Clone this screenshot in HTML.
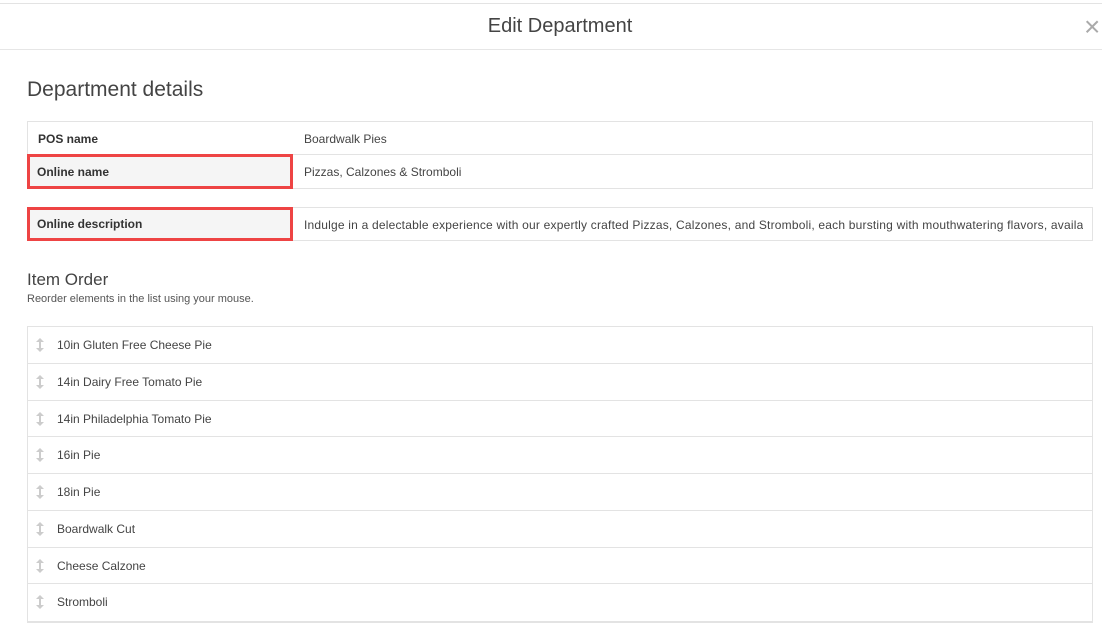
<!DOCTYPE html>
<html><head><meta charset="utf-8"><style>
*{margin:0;padding:0;box-sizing:border-box}
body{width:1102px;height:631px;background:#fff;font-family:"Liberation Sans",sans-serif;color:#444;position:relative;overflow:hidden}
.abs{position:absolute}
.topline{left:0;top:3px;width:1102px;height:1px;background:#e3e3e3}
.hdrline{left:0;top:49px;width:1102px;height:1px;background:#e6e6e6}
.title{left:0;width:1120px;top:15px;text-align:center;font-size:20px;color:#444}
.close{left:1084px;top:13px;font-size:28px;color:#aaa;line-height:28px}
h2{position:absolute;left:27px;top:78px;font-size:21px;font-weight:normal;color:#444}
.tbl{left:27px;width:1066px;border:1px solid #e3e3e3}
.row{height:33px;position:relative;font-size:12px;border-bottom:1px solid #e3e3e3}
.row:last-child{border-bottom:none}
.lab{position:absolute;left:10px;top:10px;font-weight:bold;color:#333}
.val{position:absolute;left:276px;top:10px;color:#444;white-space:nowrap;overflow:hidden;width:779px}
.red{position:absolute;border:3px solid #ee4444;background:#f5f5f5;left:27px;width:266px}
.redlab{position:absolute;left:7px;font-size:12px;font-weight:bold;color:#333}
h3{position:absolute;left:27px;top:270px;font-size:17px;font-weight:normal;color:#444}
.sub{left:27px;top:293px;font-size:11px;color:#555}
.list{left:27px;top:326px;width:1066px;border:1px solid #e3e3e3;border-bottom:2px solid #e3e3e3}
.li{height:36.75px;border-bottom:1px solid #e3e3e3;position:relative;font-size:12px;color:#444}
.li:last-child{border-bottom:none}
.li span{position:absolute;left:29px;top:11px}
.li svg{position:absolute;left:8px;top:11px}
</style></head><body>
<div class="abs topline"></div>
<div class="abs title">Edit Department</div>
<div class="abs close">×</div>
<div class="abs hdrline"></div>
<h2>Department details</h2>
<div class="abs tbl" style="top:121px;height:68px">
 <div class="row"><span class="lab">POS name</span><span class="val">Boardwalk Pies</span></div>
 <div class="row"><span class="val">Pizzas, Calzones &amp; Stromboli</span></div>
</div>
<div class="red" style="top:154px;height:35px"><span class="redlab" style="top:8px">Online name</span></div>
<div class="abs tbl" style="top:207px;height:34px">
 <div class="row" style="height:32px"><span class="val" style="letter-spacing:0.2px">Indulge in a delectable experience with our expertly crafted Pizzas, Calzones, and Stromboli, each bursting with mouthwatering flavors, available</span></div>
</div>
<div class="red" style="top:207px;height:34px"><span class="redlab" style="top:7px">Online description</span></div>
<h3>Item Order</h3>
<div class="abs sub">Reorder elements in the list using your mouse.</div>
<div class="abs list">
<div class="li"><svg width="8" height="14" viewBox="0 0 8 14"><path d="M4 0L8 4H5V10H8L4 14L0 10H3V4H0Z" fill="#ccc"/></svg><span>10in Gluten Free Cheese Pie</span></div>
<div class="li"><svg width="8" height="14" viewBox="0 0 8 14"><path d="M4 0L8 4H5V10H8L4 14L0 10H3V4H0Z" fill="#ccc"/></svg><span>14in Dairy Free Tomato Pie</span></div>
<div class="li"><svg width="8" height="14" viewBox="0 0 8 14"><path d="M4 0L8 4H5V10H8L4 14L0 10H3V4H0Z" fill="#ccc"/></svg><span>14in Philadelphia Tomato Pie</span></div>
<div class="li"><svg width="8" height="14" viewBox="0 0 8 14"><path d="M4 0L8 4H5V10H8L4 14L0 10H3V4H0Z" fill="#ccc"/></svg><span>16in Pie</span></div>
<div class="li"><svg width="8" height="14" viewBox="0 0 8 14"><path d="M4 0L8 4H5V10H8L4 14L0 10H3V4H0Z" fill="#ccc"/></svg><span>18in Pie</span></div>
<div class="li"><svg width="8" height="14" viewBox="0 0 8 14"><path d="M4 0L8 4H5V10H8L4 14L0 10H3V4H0Z" fill="#ccc"/></svg><span>Boardwalk Cut</span></div>
<div class="li"><svg width="8" height="14" viewBox="0 0 8 14"><path d="M4 0L8 4H5V10H8L4 14L0 10H3V4H0Z" fill="#ccc"/></svg><span>Cheese Calzone</span></div>
<div class="li"><svg width="8" height="14" viewBox="0 0 8 14"><path d="M4 0L8 4H5V10H8L4 14L0 10H3V4H0Z" fill="#ccc"/></svg><span>Stromboli</span></div>
</div>
</body></html>
